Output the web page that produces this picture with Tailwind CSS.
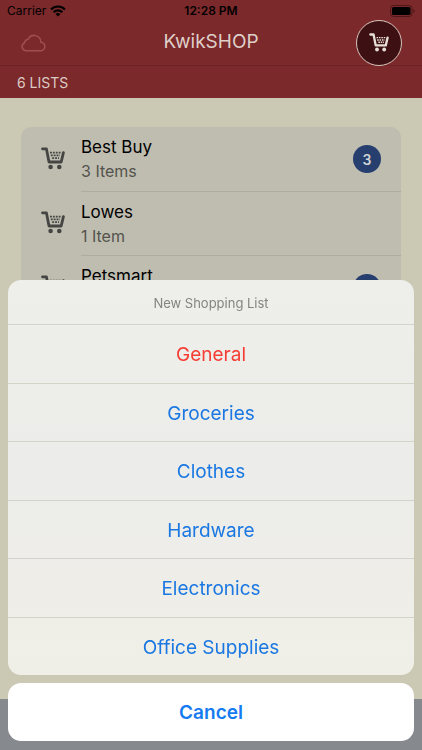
<!DOCTYPE html>
<html lang="en">
<head>
<meta charset="utf-8">
<meta name="viewport" content="width=device-width, initial-scale=1">
<title>KwikSHOP</title>
<script src="https://cdn.jsdelivr.net/npm/@tailwindcss/browser@4"></script>
</head>
<body class="font-['Inter','Liberation_Sans',sans-serif] bg-[#cbc8b4]">
<svg class="hidden" aria-hidden="true">
  <symbol id="cart" viewBox="0 0 24 23">
    <path d="M1.500 1.800H5.400L8 15H20.200L22.400 5.600" fill="none" stroke="currentColor" stroke-width="2.800" stroke-linecap="round" stroke-linejoin="round"/>
    <path d="M9 5.600H20M9.800 8.400H19M11.200 11.200H18" fill="none" stroke="currentColor" stroke-width="1.700" stroke-dasharray="1.900 1"/>
    <circle cx="9.600" cy="20" r="2.300" fill="currentColor"/>
    <circle cx="18.300" cy="20" r="2.300" fill="currentColor"/>
  </symbol>
</svg>
<div class="min-h-screen flex flex-col">
  <header class="bg-[#7b292b]">
    <div class="h-[22px] px-[7px] grid grid-cols-3 items-center text-[12px] text-black">
      <div class="flex items-center gap-1">
        <span>Carrier</span>
        <svg class="w-4 h-3" viewBox="0 0 16 12" fill="none" stroke="#000" stroke-width="2.100" role="img" aria-label="Wi-Fi">
          <path d="M1 4.400A10 10 0 0 1 15 4.400"/>
          <path d="M3.600 7.200A6.200 6.200 0 0 1 12.400 7.200"/>
          <path d="M8 11.600L5.500 9.100A3.600 3.600 0 0 1 10.500 9.100Z" fill="#000" stroke="none"/>
        </svg>
      </div>
      <div class="text-center font-semibold">12:28 PM</div>
      <svg class="w-[25px] h-3 justify-self-end" viewBox="0 0 25 12" role="img" aria-label="Battery full">
        <rect x=".5" y=".5" width="21.500" height="11" rx="3" fill="none" stroke="#4f1719"/>
        <rect x="2" y="2" width="18.500" height="8" rx="1.500" fill="#000"/>
        <path d="M23.300 4V8Q24.700 7.400 24.700 6T23.300 4Z" fill="#4f1719"/>
      </svg>
    </div>
    <div class="h-11 px-5 pb-[2px] grid grid-cols-[46px_1fr_46px] items-center border-b border-[#6c2224]">
      <svg class="w-[26px] h-[18px]" viewBox="0 0 26 18" fill="none" stroke="#a04f51" stroke-width="1.500" stroke-linejoin="round" role="img" aria-label="Cloud">
        <path d="M5.800 16.700H20.400A4.200 4.200 0 0 0 20.800 8.200A6.600 6.600 0 0 0 8.200 5.300A4 4 0 0 0 4.600 8.700A4.200 4.200 0 0 0 5.800 16.700Z"/>
      </svg>
      <h1 class="text-center text-[19px] text-[#dfcfc9]">KwikSHOP</h1>
      <button class="size-[46px] -my-1 justify-self-end rounded-full border border-[#d9c5bd] bg-[#3d1113] text-[#e9dfda] flex items-center justify-center" aria-label="New list">
        <svg class="w-5 h-[19px]"><use href="#cart"/></svg>
      </button>
    </div>
    <h2 class="h-8 px-[17px] flex items-center text-[14px] text-[#dccbc5]">6 LISTS</h2>
  </header>
  <main class="grow px-[21px] pt-[29px]">
    <ul class="rounded-[10px] bg-[#bfbdb0] overflow-hidden">
      <li class="flex h-16 pl-5">
        <svg class="w-6 h-[23px] mt-5 mr-4 shrink-0 text-[#454643]"><use href="#cart"/></svg>
        <div class="grow flex items-center justify-between pr-5">
          <div><p class="text-[17px] leading-6 text-black">Best Buy</p><p class="text-[16px] leading-6 text-[#53534d]">3 Items</p></div>
          <span class="size-7 rounded-full bg-[#263f6e] text-[#d0d2d3] text-[14px] font-semibold flex items-center justify-center">3</span>
        </div>
      </li>
      <li class="flex h-16 pl-5">
        <svg class="w-6 h-[23px] mt-5 mr-4 shrink-0 text-[#454643]"><use href="#cart"/></svg>
        <div class="grow flex items-center justify-between pr-5 border-t border-[#afada2]">
          <div><p class="text-[17px] leading-6 text-black">Lowes</p><p class="text-[16px] leading-6 text-[#53534d]">1 Item</p></div>
        </div>
      </li>
      <li class="flex h-16 pl-5">
        <svg class="w-6 h-[23px] mt-5 mr-4 shrink-0 text-[#454643]"><use href="#cart"/></svg>
        <div class="grow flex items-center justify-between pr-5 border-t border-[#afada2]">
          <div class="h-12"><p class="text-[17px] leading-6 text-black">Petsmart</p></div>
          <span class="size-7 rounded-full bg-[#263f6e]"></span>
        </div>
      </li>
    </ul>
  </main>
  <footer class="h-[51px] bg-[#86898d]"></footer>
</div>
<div class="fixed inset-x-0 bottom-0 px-2 pb-[9px] flex flex-col gap-2" role="dialog" aria-labelledby="sheet-title">
  <div class="rounded-[13px] overflow-hidden bg-linear-to-b from-[#eeeeea] via-[#ececea] to-[#f0efe7]">
    <h2 id="sheet-title" class="h-11 pt-[3px] flex items-center justify-center text-[13px] text-[#85857f]">New Shopping List</h2>
    <div class="grid grid-rows-6 h-[351px] text-[19px] text-[#1b78e2]">
      <button class="pt-[3px] border-t border-[#d3d3ca] text-[#f53d34]">General</button>
      <button class="pt-[3px] border-t border-[#d3d3ca]">Groceries</button>
      <button class="pt-[3px] border-t border-[#d3d3ca]">Clothes</button>
      <button class="pt-[3px] border-t border-[#d3d3ca]">Hardware</button>
      <button class="pt-[3px] border-t border-[#d3d3ca]">Electronics</button>
      <button class="pt-[3px] border-t border-[#d3d3ca]">Office Supplies</button>
    </div>
  </div>
  <button class="h-[58px] pt-[3px] rounded-[13px] bg-white text-[19px] font-semibold text-[#147bf0]">Cancel</button>
</div>
</body>
</html>
